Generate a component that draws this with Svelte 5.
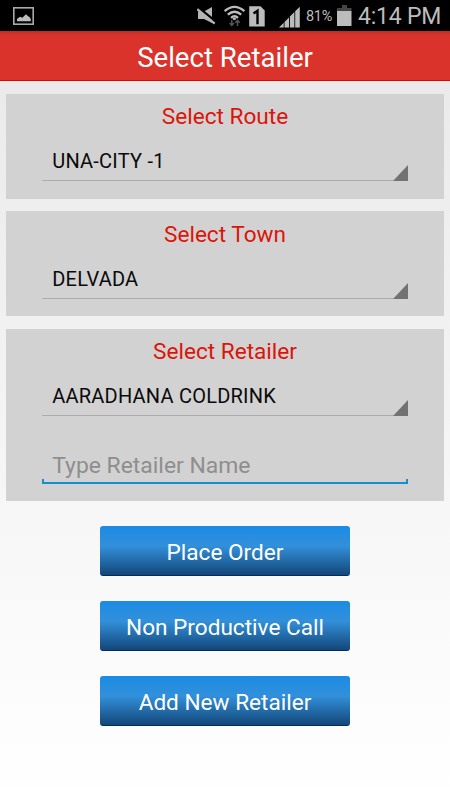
<script>
	const routes = ['UNA-CITY -1'];
	const towns = ['DELVADA'];
	const retailers = ['AARADHANA COLDRINK'];

	let route = $state(routes[0]);
	let town = $state(towns[0]);
	let retailer = $state(retailers[0]);
	let search = $state('');

	const actions = ['Place Order', 'Non Productive Call', 'Add New Retailer'];
</script>

{#snippet spinner(options, value, onchange, label)}
	<div class="spinner">
		<select {value} onchange={(e) => onchange(e.target.value)} aria-label={label}>
			{#each options as option}
				<option value={option}>{option}</option>
			{/each}
		</select>
		<svg class="corner" width="15" height="16" viewBox="0 0 15 16">
			<path d="M15 0v16H0z" fill="#727272" />
		</svg>
	</div>
{/snippet}

<div class="screen">
	<div class="status-bar">
		<svg class="picture" width="21" height="18" viewBox="0 0 21 18">
			<rect x="0.8" y="0.8" width="19.4" height="16.4" fill="none" stroke="#aaa" stroke-width="1.6" />
			<path d="M4 14.3v-2.2l3-2.4 2.3 1 3.7-3.5 2.3 2.4 1 .2 1.5 2.3v2.2z" fill="#bcbcbc" />
		</svg>

		<!-- sound off, wifi, sim, signal -->
		<svg class="radios" width="104" height="24" viewBox="197 5 104 24">
			<path d="M198 11.5h6l8-4.5v16l-8-4h-6z" fill="#b5b5b5" />
			<path d="M198.8 8l17.2 13.6" stroke="#000" stroke-width="2.4" />
			<path d="M197.3 9.2l17.4 14.4" stroke="#b5b5b5" stroke-width="2.2" />

			<g fill="none" stroke="#bcbcbc" stroke-width="2.3">
				<path d="M224.6 11.2q9.9-8.6 19.8 0" />
				<path d="M227.8 14.7q6.7-6 13.4 0" />
				<path d="M231 17.8q3.5-3 7 0" />
			</g>
			<path d="M232.4 18.6l2-1.1 2 1.1-1.2 1.4h-1.6z" fill="#bcbcbc" />
			<path d="M231.8 20v5M229.6 22.9l2.2 2.4 2.2-2.4M237.5 26v-5M235.3 22.7l2.2-2.4 2.2 2.4" fill="none" stroke="#555" stroke-width="1.5" />

			<path d="M249.2 6.2h11.3l4.2 4.2v16.1h-15.5z" fill="#bcbcbc" />
			<path d="M253.5 13.4l4-2.6v13.4" fill="none" stroke="#000" stroke-width="2.4" />

			<g fill="#bcbcbc">
				<path d="M279 27.5l4.7-4.7v4.7z" />
				<path d="M284.5 27.5V22l4.5-4.5v10z" />
				<path d="M289.9 27.5V16.6l4.5-4.5v15.4z" />
				<path d="M295.2 27.5V11.3l4.6-4.6v20.8z" />
			</g>
		</svg>

		<span class="percent">81%</span>
		<svg class="battery" width="15" height="21" viewBox="0 0 15 21">
			<path d="M5 0h5v3h4.5v3.5H0V3h5z" fill="#444" />
			<path d="M0 6h14.5v15H0z" fill="#bcbcbc" />
		</svg>
		<span class="clock">4:14 PM</span>
	</div>

	<header>
		<h1>Select Retailer</h1>
	</header>

	<main>
		<section>
			<h2>Select Route</h2>
			{@render spinner(routes, route, (v) => (route = v), 'Route')}
		</section>
		<section>
			<h2>Select Town</h2>
			{@render spinner(towns, town, (v) => (town = v), 'Town')}
		</section>
		<section class="retailer">
			<h2>Select Retailer</h2>
			{@render spinner(retailers, retailer, (v) => (retailer = v), 'Retailer')}
			<div class="field">
				<input type="text" placeholder="Type Retailer Name" bind:value={search} />
			</div>
		</section>

		<div class="actions">
			{#each actions as action}
				<button type="button">{action}</button>
			{/each}
		</div>
	</main>
</div>

<style>
	.screen {
		display: flex;
		flex-direction: column;
		width: 450px;
		height: 800px;
		overflow: hidden;
		font-family: Roboto, sans-serif;
		background: linear-gradient(#e8e8e8, #fff);
	}

	.status-bar {
		display: flex;
		box-sizing: border-box;
		height: 31px;
		padding: 0 10px 0 13px;
		background: #000;
		color: #bcbcbc;
		flex-shrink: 0;
	}

	.picture {
		margin-top: 7px;
	}

	.radios {
		margin: 5px 0 0 auto;
	}

	.percent {
		width: 27px;
		margin: 0 4px 0 5px;
		font-size: 14.5px;
		line-height: 34px;
		letter-spacing: -0.3px;
	}

	.battery {
		margin-top: 5px;
	}

	.clock {
		width: 82px;
		margin-left: 6px;
		font-size: 23px;
		line-height: 33px;
		letter-spacing: -0.2px;
		white-space: nowrap;
	}

	header {
		box-sizing: border-box;
		height: 50px;
		border-bottom: 1px solid #db0808;
		background: linear-gradient(#bd2c26, #d9332c 4px);
		flex-shrink: 0;
	}

	h1 {
		margin: 0;
		color: #fff;
		font-size: 27.6px;
		font-weight: 400;
		line-height: 53px;
		text-align: center;
	}

	main {
		display: flex;
		flex-direction: column;
		gap: 12.5px;
		padding: 12.75px 6.25px 0;
	}

	section {
		box-sizing: border-box;
		height: 105px;
		padding: 0.3px 36px 0;
		background: #d2d2d2;
	}

	.retailer {
		height: 172px;
	}

	h2 {
		height: 44px;
		margin: 0;
		color: #dc1409;
		font-size: 22.6px;
		font-weight: 400;
		line-height: 46px;
		text-align: center;
	}

	.spinner {
		position: relative;
		box-sizing: border-box;
		height: 43px;
		border-bottom: 1px solid #acacac;
	}

	select {
		width: 100%;
		height: 46px;
		padding: 0 0 0 10px;
		border: 0;
		outline: 0;
		appearance: none;
		background: none;
		color: #0a0a0a;
		font: 20px Roboto, sans-serif;
		letter-spacing: 0.22px;
	}

	.corner {
		position: absolute;
		right: 0;
		bottom: -1px;
		pointer-events: none;
	}

	.field {
		box-sizing: border-box;
		height: 68px;
		padding-top: 24px;
	}

	input {
		box-sizing: border-box;
		width: 100%;
		height: 44px;
		padding: 6px 10px 0;
		border: 0;
		outline: 0;
		background:
			linear-gradient(#168fca, #168fca) left bottom / 2px 5px no-repeat,
			linear-gradient(#168fca, #168fca) right bottom / 2px 5px no-repeat,
			linear-gradient(#168fca, #168fca) left bottom / 100% 2px no-repeat;
		font: 22.9px Roboto, sans-serif;
	}

	input::placeholder {
		color: #8e8e8e;
	}

	.actions {
		display: flex;
		flex-direction: column;
		align-items: center;
		gap: 25px;
		margin-top: 13px;
	}

	button {
		box-sizing: border-box;
		width: 250px;
		height: 50px;
		padding: 3px 0 0;
		border: 0;
		border-radius: 3px;
		background: linear-gradient(#1b8be5, #3290da 40%, #14487a 97%, #002a68 98%);
		color: #fff;
		font: 22.6px Roboto, sans-serif;
	}
</style>
